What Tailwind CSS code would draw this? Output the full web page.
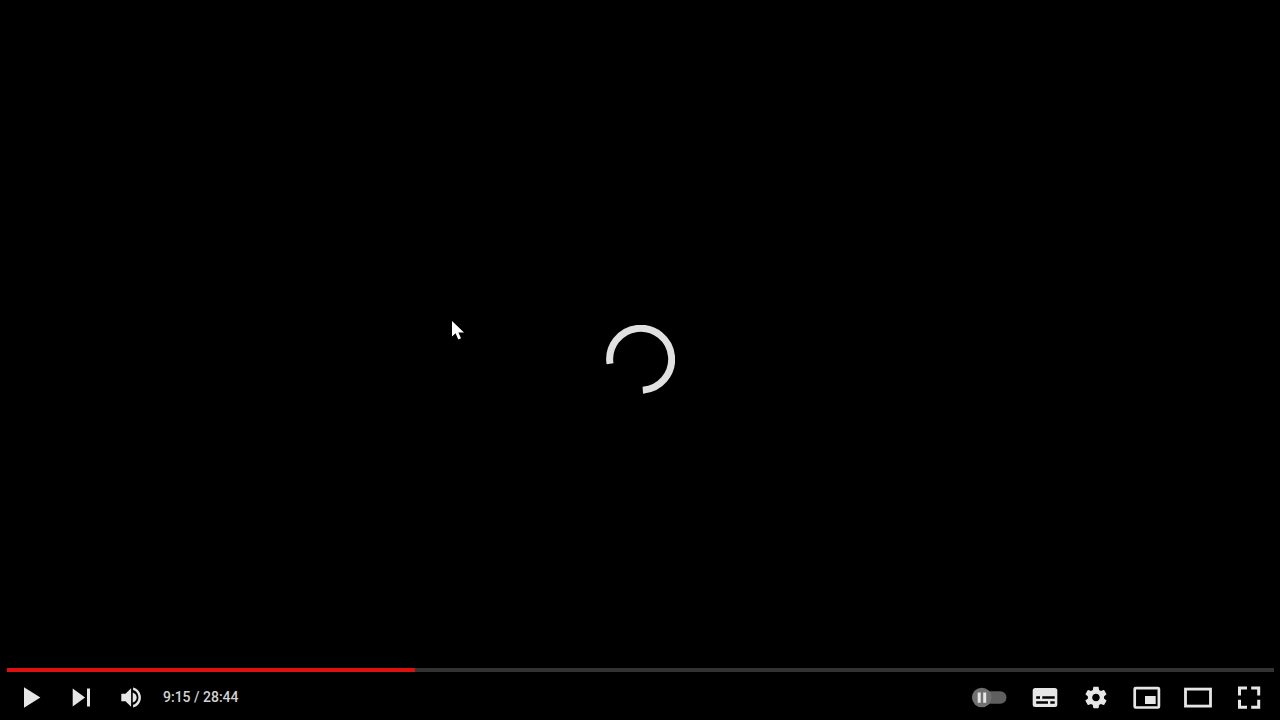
<!DOCTYPE html>
<html lang="en">
<head>
    <meta charset="UTF-8">
    <meta name="viewport" content="width=device-width, initial-scale=1.0">
    <title>Video player</title>
    <script src="https://cdn.jsdelivr.net/npm/@tailwindcss/browser@4"></script>
</head>
<body class="bg-black font-[Roboto,sans-serif]">
    <div class="relative flex flex-col h-screen bg-black text-[#e6e6e6] overflow-hidden">
        <!-- Video area -->
        <main class="flex-1"></main>

        <!-- Loading spinner -->
        <div class="absolute inset-0 flex items-center justify-center pointer-events-none" role="status" aria-label="Loading">
            <svg class="size-[70px]" viewBox="0 0 70 70" fill="none" stroke="#e0e0e0" stroke-width="7">
                <path d="M5 38.8A31 31 0 1 1 37.8 65.2"/>
            </svg>
        </div>

        <!-- Mouse pointer -->
        <svg class="absolute left-[452px] top-[321px] w-3 h-5 pointer-events-none" viewBox="0 0 12 20" fill="#fff" aria-hidden="true">
            <path d="M0 0v15.5l3.6-3.2L6.3 18.4l2.7-1.2L6.4 11.4H12z"/>
        </svg>

        <!-- Controls -->
        <div class="pl-[7px] pr-[6px]">
            <input id="seek" type="range" min="0" max="1724" value="555" aria-label="Seek"
                class="block w-full h-1 m-0 appearance-none cursor-pointer bg-[#333333] [&::-webkit-slider-thumb]:appearance-none [&::-webkit-slider-thumb]:w-0 [&::-webkit-slider-thumb]:h-0"
                style="background-image: linear-gradient(to right, #dc1010 32.2%, transparent 32.2%)">

            <div class="flex items-center justify-between h-12">
                <div class="flex items-center">
                    <button type="button" aria-label="Play" class="cursor-pointer">
                        <svg class="w-[50px] h-12" viewBox="0 0 50 48" fill="currentColor"><path d="M17 15.2l16.4 10.3L17 35.8z"/></svg>
                    </button>
                    <button type="button" aria-label="Next" class="cursor-pointer">
                        <svg class="w-[50px] h-12" viewBox="0 0 50 48" fill="currentColor"><path d="M15.7 16.6l12.4 8.9-12.4 8.9zM30 16.6h3v17.8h-3z"/></svg>
                    </button>
                    <button type="button" aria-label="Mute" class="cursor-pointer">
                        <svg class="w-[50px] h-12" viewBox="0 0 50 48" fill="currentColor">
                            <path d="M14.3 21.7v7.6h4.2l5.6 5.5V16.2l-5.6 5.5z"/>
                            <path transform="translate(10.4 12) scale(1.12)" d="M17.2 12c0-1.9-1.1-3.6-3.5-4.5v9c2.4-.9 3.5-2.6 3.5-4.5zM14 3.1v2.3c2.89.86 4.8 3.54 4.8 6.6s-1.91 5.74-4.8 6.6v2.3c4.01-.91 7-4.49 7-8.9s-2.99-7.99-7-8.9z"/>
                        </svg>
                    </button>
                    <span class="pl-[6px] pt-[2px] text-[14px] leading-5 font-medium text-[#d2d2d2] whitespace-nowrap">9:15 / 28:44</span>
                </div>

                <div class="flex items-center">
                    <label class="relative block cursor-pointer">
                        <input id="autoplay" type="checkbox" class="sr-only" aria-label="Autoplay">
                        <svg class="w-[58px] h-12" viewBox="0 0 58 48">
                            <rect x="14" y="19.3" width="31.5" height="12.4" rx="6.2" fill="#5f5f5f"/>
                            <circle cx="20.8" cy="25.5" r="9.8" fill="#707070"/>
                            <path d="M16.7 20.5h3v10.3h-3zM22.2 20.5h3v10.3h-3z" fill="#e6e6e6"/>
                        </svg>
                    </label>
                    <button type="button" aria-label="Subtitles" class="cursor-pointer">
                        <svg class="w-[51px] h-12" viewBox="0 0 51 48" fill="currentColor" fill-rule="evenodd">
                            <path d="M16.2 16h19.6a2.5 2.5 0 0 1 2.5 2.5v14a2.5 2.5 0 0 1-2.5 2.5H16.2a2.5 2.5 0 0 1-2.5-2.5v-14a2.5 2.5 0 0 1 2.5-2.5zM17.2 24.2v2.5H21v-2.5zM23.3 24.2v2.5h12.4v-2.5zM17.2 29.3v2.5H29v-2.5zM31.3 29.3v2.5h4.4v-2.5z"/>
                        </svg>
                    </button>
                    <button type="button" aria-label="Settings" class="cursor-pointer">
                        <svg class="w-[51px] h-12" viewBox="0 0 51 48" fill="currentColor">
                            <path transform="translate(13 12.5) scale(1.08)" d="M19.43 12.98c.04-.32.07-.64.07-.98s-.03-.66-.07-.98l2.11-1.65c.19-.15.24-.42.12-.64l-2-3.46c-.12-.22-.39-.3-.61-.22l-2.49 1c-.52-.4-1.08-.73-1.69-.98l-.38-2.65C14.46 2.18 14.25 2 14 2h-4c-.25 0-.46.18-.49.42l-.38 2.65c-.61.25-1.17.59-1.69.98l-2.49-1c-.23-.09-.49 0-.61.22l-2 3.46c-.13.22-.07.49.12.64l2.11 1.65c-.04.32-.07.65-.07.98s.03.66.07.98l-2.11 1.65c-.19.15-.24.42-.12.64l2 3.46c.12.22.39.3.61.22l2.49-1c.52.4 1.08.73 1.69.98l.38 2.65c.03.24.24.42.49.42h4c.25 0 .46-.18.49-.42l.38-2.65c.61-.25 1.17-.59 1.69-.98l2.49 1c.23.09.49 0 .61-.22l2-3.46c.12-.22.07-.49-.12-.64l-2.11-1.65zM12 15.5c-1.93 0-3.5-1.57-3.5-3.5s1.57-3.5 3.5-3.5 3.5 1.57 3.5 3.5-1.57 3.5-3.5 3.5z"/>
                        </svg>
                    </button>
                    <button type="button" aria-label="Miniplayer" class="cursor-pointer">
                        <svg class="w-[51px] h-12" viewBox="0 0 51 48" fill="currentColor">
                            <rect x="13.7" y="16.1" width="24.2" height="19.4" rx="1" fill="none" stroke="currentColor" stroke-width="2.7"/>
                            <path d="M24 24h10.7v8H24z"/>
                        </svg>
                    </button>
                    <button type="button" aria-label="Theater mode" class="cursor-pointer">
                        <svg class="w-[51px] h-12" viewBox="0 0 51 48">
                            <rect x="13.5" y="17.1" width="25" height="17" fill="none" stroke="currentColor" stroke-width="2.8"/>
                        </svg>
                    </button>
                    <button type="button" aria-label="Full screen" class="cursor-pointer">
                        <svg class="w-[51px] h-12" viewBox="0 0 51 48" fill="none" stroke="currentColor" stroke-width="3">
                            <path d="M16.5 23.5V16H24M28.2 16h7.5v7.5M35.7 27.7v7.5h-7.5M24 35.2h-7.5v-7.5"/>
                        </svg>
                    </button>
                </div>
            </div>
        </div>
    </div>
</body>
</html>
